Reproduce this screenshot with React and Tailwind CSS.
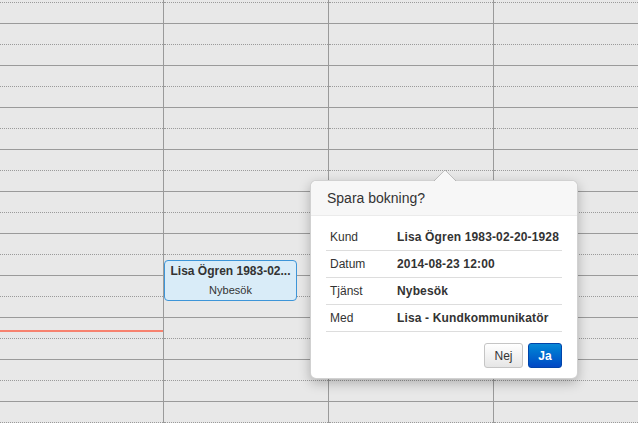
import React from 'react';

const ROWS = 20;

function Column({ className = '', children }) {
  return (
    <div className={`relative flex flex-col shrink-0 ${className}`}>
      {/* half-hour slots */}
      <div className="h-[8px] border-b border-dotted border-[#9a9a9a]" />
      {Array.from({ length: ROWS }).map((_, i) => (
        <div
          key={i}
          className={
            i % 2 === 0
              ? 'h-[21px] shrink-0 border-b border-solid border-[#9a9a9a]'
              : 'h-[21px] shrink-0 border-b border-dotted border-[#9a9a9a]'
          }
        />
      ))}
      {children}
    </div>
  );
}

function Row({ label, value }) {
  return (
    <div className="flex h-[27px] items-center border-b border-[#dddddd]">
      <div className="w-[67px] pl-[4px] text-[12px] text-[#333]">{label}</div>
      <div className="pl-[4px] text-[12px] font-bold tracking-[0.15px] text-[#333]">{value}</div>
    </div>
  );
}

export default function App() {
  return (
    <div
      className="relative w-[638px] h-[423px] overflow-hidden bg-[#e8e8e8] flex"
      style={{ fontFamily: '"Liberation Sans", Arial, sans-serif' }}
    >
      <Column className="w-[163px]">
        {/* now marker */}
        <div className="absolute left-0 right-0 top-[330px] h-[2px] bg-[#f7826f]" />
      </Column>
      <Column className="w-[165px] border-l border-[#9a9a9a]">
        <div className="absolute left-0 top-[260px] w-[133px] h-[41px] rounded-[4px] border border-[#3d95d8] bg-[#d9ecf8] px-[2px] pt-[3px] text-center">
          <div className="whitespace-nowrap text-[12px] font-bold leading-[15px] text-[#333]">Lisa Ögren 1983-02...</div>
          <div className="mt-[4px] text-[11px] leading-[14px] text-[#333]">Nybesök</div>
        </div>
      </Column>
      <Column className="w-[165px] border-l border-[#9a9a9a]" />
      <Column className="w-[145px] border-l border-[#9a9a9a]" />

      {/* save popover */}
      <div className="absolute left-[310px] top-[180px] w-[268px] rounded-[6px] border border-[rgba(0,0,0,0.18)] bg-white shadow-[0_4px_12px_rgba(0,0,0,0.25)]">
        <svg className="absolute left-[122px] top-[-12px]" width="24" height="13" viewBox="0 0 24 13">
          <path d="M0.5 12.5 L12 1 L23.5 12.5" fill="#f7f7f7" stroke="rgba(0,0,0,0.2)" />
          <rect x="0" y="12" width="24" height="1" fill="#f7f7f7" />
        </svg>
        <div className="h-[35px] rounded-t-[6px] border-b border-[#ebebeb] bg-[#f7f7f7] pl-[16px] flex items-center text-[14px] text-[#333]">
          Spara bokning?
        </div>
        <div className="px-[15px] pt-[8px] pb-[10px]">
          <Row label="Kund" value="Lisa Ögren 1983-02-20-1928" />
          <Row label="Datum" value="2014-08-23 12:00" />
          <Row label="Tjänst" value="Nybesök" />
          <Row label="Med" value="Lisa - Kundkommunikatör" />
          <div className="mt-[11px] flex justify-end gap-[5px]">
            <button className="h-[25px] w-[39px] rounded-[3px] border border-[#c5c5c5] bg-gradient-to-b from-white to-[#e6e6e6] text-[12px] text-[#333]">
              Nej
            </button>
            <button className="h-[25px] w-[34px] rounded-[3px] border border-[#0044aa] bg-gradient-to-b from-[#0a88d6] to-[#0447c4] text-[12px] font-bold text-white">
              Ja
            </button>
          </div>
        </div>
      </div>
    </div>
  );
}
